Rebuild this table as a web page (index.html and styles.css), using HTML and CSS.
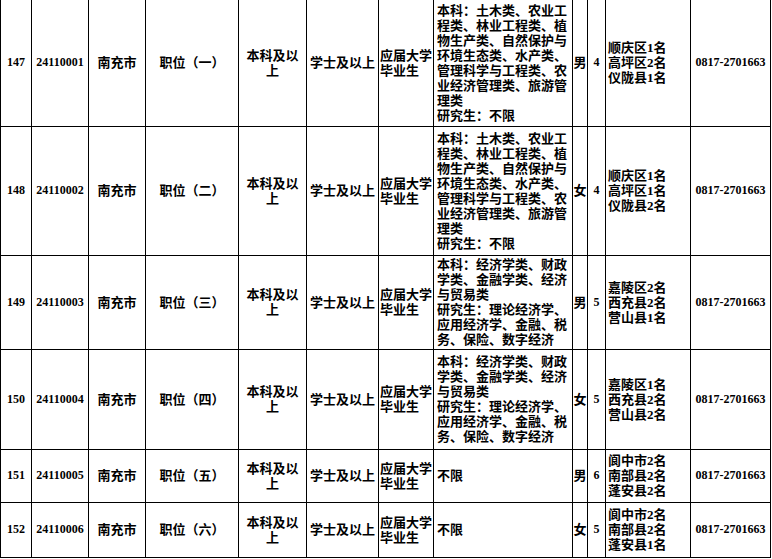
FILE: index.html
```html
<!DOCTYPE html>
<html lang="zh-CN">
<head>
<meta charset="utf-8">
<title>职位表</title>
<link rel="stylesheet" href="styles.css">
</head>
<body>
<table class="jobs">
  <colgroup>
    <col class="c-no"><col class="c-code"><col class="c-city"><col class="c-pos"><col class="c-edu"><col class="c-deg"><col class="c-type"><col class="c-major"><col class="c-sex"><col class="c-num"><col class="c-area"><col class="c-tel">
  </colgroup>
  <tbody>
    <tr class="r1 first">
      <td class="num">147</td><td class="num">24110001</td><td>南充市</td><td>职位（一）</td>
      <td>本科及以<br>上</td><td>学士及以上</td><td class="left">应届大学<br>毕业生</td>
      <td class="left major">本科：土木类、农业工<br>程类、林业工程类、植<br>物生产类、自然保护与<br>环境生态类、水产类、<br>管理科学与工程类、农<br>业经济管理类、旅游管<br>理类<br>研究生：不限</td>
      <td class="sex">男</td><td class="num cnt">4</td>
      <td class="left area">顺庆区1名<br>高坪区2名<br>仪陇县1名</td><td class="num">0817-2701663</td>
    </tr>
    <tr class="r2">
      <td class="num">148</td><td class="num">24110002</td><td>南充市</td><td>职位（二）</td>
      <td>本科及以<br>上</td><td>学士及以上</td><td class="left">应届大学<br>毕业生</td>
      <td class="left major">本科：土木类、农业工<br>程类、林业工程类、植<br>物生产类、自然保护与<br>环境生态类、水产类、<br>管理科学与工程类、农<br>业经济管理类、旅游管<br>理类<br>研究生：不限</td>
      <td class="sex">女</td><td class="num cnt">4</td>
      <td class="left area">顺庆区1名<br>高坪区1名<br>仪陇县2名</td><td class="num">0817-2701663</td>
    </tr>
    <tr class="r3">
      <td class="num">149</td><td class="num">24110003</td><td>南充市</td><td>职位（三）</td>
      <td>本科及以<br>上</td><td>学士及以上</td><td class="left">应届大学<br>毕业生</td>
      <td class="left major">本科：经济学类、财政<br>学类、金融学类、经济<br>与贸易类<br>研究生：理论经济学、<br>应用经济学、金融、税<br>务、保险、数字经济</td>
      <td class="sex">男</td><td class="num cnt">5</td>
      <td class="left area">嘉陵区2名<br>西充县2名<br>营山县1名</td><td class="num">0817-2701663</td>
    </tr>
    <tr class="r4">
      <td class="num">150</td><td class="num">24110004</td><td>南充市</td><td>职位（四）</td>
      <td>本科及以<br>上</td><td>学士及以上</td><td class="left">应届大学<br>毕业生</td>
      <td class="left major">本科：经济学类、财政<br>学类、金融学类、经济<br>与贸易类<br>研究生：理论经济学、<br>应用经济学、金融、税<br>务、保险、数字经济</td>
      <td class="sex">女</td><td class="num cnt">5</td>
      <td class="left area">嘉陵区1名<br>西充县2名<br>营山县2名</td><td class="num">0817-2701663</td>
    </tr>
    <tr class="r5">
      <td class="num">151</td><td class="num">24110005</td><td>南充市</td><td>职位（五）</td>
      <td>本科及以<br>上</td><td>学士及以上</td><td class="left">应届大学<br>毕业生</td>
      <td class="left major">不限</td>
      <td class="sex">男</td><td class="num cnt">6</td>
      <td class="left area">阆中市2名<br>南部县2名<br>蓬安县2名</td><td class="num">0817-2701663</td>
    </tr>
    <tr class="r6">
      <td class="num">152</td><td class="num">24110006</td><td>南充市</td><td>职位（六）</td>
      <td>本科及以<br>上</td><td>学士及以上</td><td class="left">应届大学<br>毕业生</td>
      <td class="left major">不限</td>
      <td class="sex">女</td><td class="num cnt">5</td>
      <td class="left area">阆中市2名<br>南部县2名<br>蓬安县1名</td><td class="num">0817-2701663</td>
    </tr>
  </tbody>
</table>
</body>
</html>
```

FILE: styles.css
```css
html, body {
  margin: 0;
  padding: 0;
  background: #ffffff;
}

.jobs {
  border-collapse: collapse;
  table-layout: fixed;
  width: 771px;
  font-family: "Liberation Serif", "Noto Sans CJK SC", serif;
  font-weight: 700;
  font-size: 13px;
  line-height: 15px;
  color: #000;
}

.c-no { width: 31px; }
.c-code { width: 57px; }
.c-city { width: 57px; }
.c-pos { width: 93px; }
.c-edu { width: 68px; }
.c-deg { width: 72px; }
.c-type { width: 55px; }
.c-major { width: 139px; }
.c-sex { width: 15px; }
.c-num { width: 18px; }
.c-area { width: 85px; }
.c-tel { width: 80px; }

.jobs td {
  border: 1px solid #000;
  padding: 0 1px;
  text-align: center;
  vertical-align: middle;
  overflow: hidden;
  white-space: nowrap;
}

.jobs tr.first td {
  border-top: none;
}

.jobs td.left {
  text-align: left;
}

.jobs td.major {
  padding-left: 3px;
}

.jobs td.area {
  padding-left: 2px;
}

.jobs td.num {
  font-size: 12px;
}

.jobs td.sex {
  padding: 0;
}

.r1 { height: 126px; }
.r2 { height: 129px; }
.r3 { height: 94px; }
.r4 { height: 100px; }
.r5 { height: 53px; }
.r6 { height: 55px; }
```
